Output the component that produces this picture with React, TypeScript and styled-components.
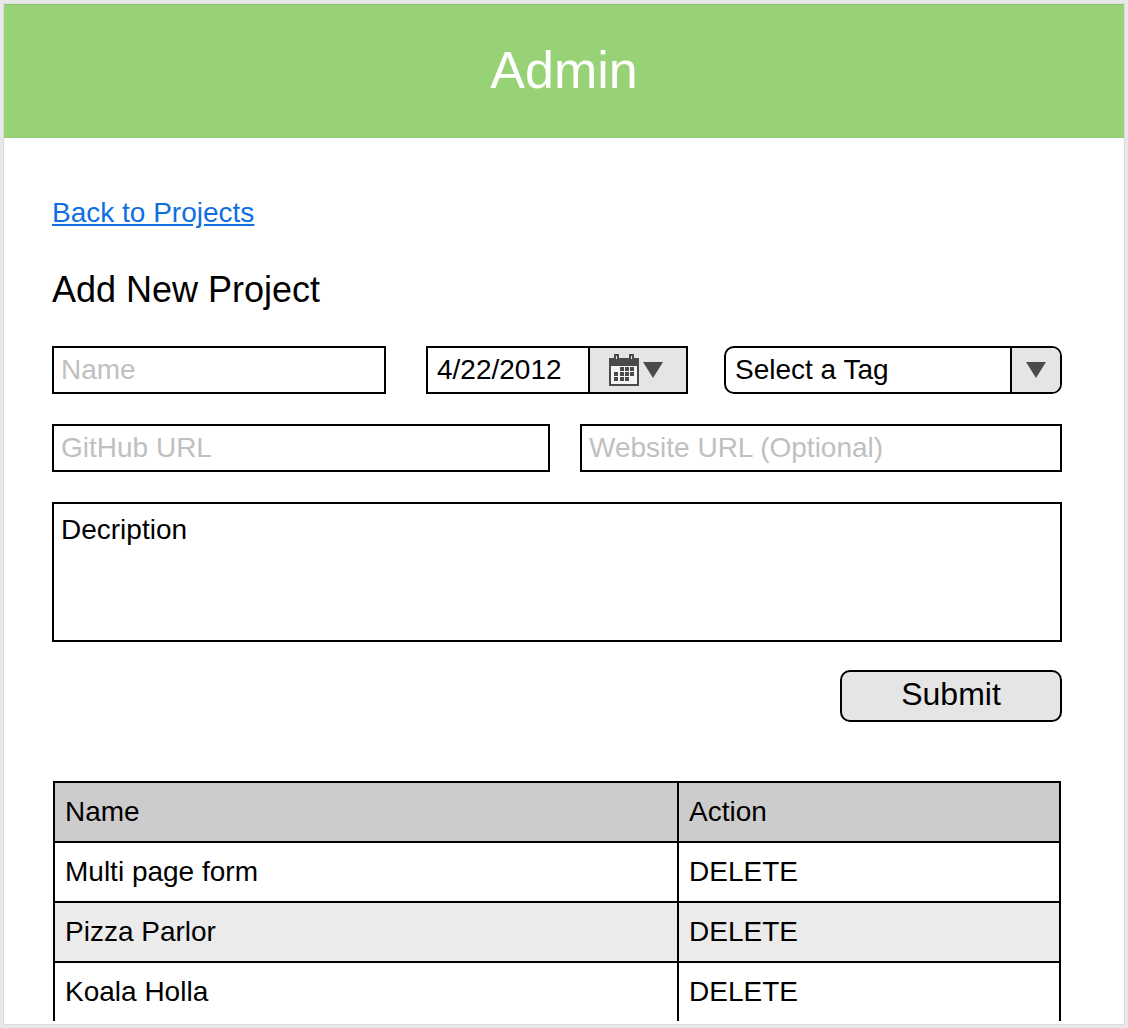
import styled, { createGlobalStyle } from "styled-components";

const GlobalStyle = createGlobalStyle`
  html, body {
    margin: 0;
    height: 100%;
    background: #e8e8e8;
    font-family: "Liberation Sans", Arial, sans-serif;
    overflow: hidden;
  }
`;

const Page = styled.div`
  box-sizing: border-box;
  width: 1128px;
  height: 1028px;
  padding: 4px;
`;

const Frame = styled.div`
  height: 1020px;
  background: #fff;
  overflow: hidden;
  box-shadow: 0 0 0 1px #dcdcdc;
`;

const Header = styled.header`
  height: 134px;
  display: flex;
  align-items: center;
  justify-content: center;
  padding-bottom: 3px;
  background: #98d276;
  border-top: 1px solid #8cc46e;
  box-sizing: border-box;
  color: #fff;
  font-size: 52px;
`;

const Content = styled.main`
  box-sizing: border-box;
  height: 883px;
  overflow: hidden;
  padding: 59px 62px 0 48px;
  display: flex;
  flex-direction: column;
`;

const BackLink = styled.a`
  color: #0f6fe0;
  font-size: 28px;
  line-height: 32px;
  text-decoration: underline;
  align-self: flex-start;
`;

const Title = styled.h2`
  margin: 41px 0 6px;
  font-weight: 400;
  font-size: 36px;
  line-height: 40px;
  color: #000;
`;

const Row = styled.div<{ $gap: number }>`
  display: flex;
  flex-shrink: 0;
  gap: ${(p) => p.$gap}px;
  margin-top: 30px;
`;

const Input = styled.div<{ $width: number }>`
  box-sizing: border-box;
  width: ${(p) => p.$width}px;
  height: 48px;
  padding: 0 7px;
  border: 2px solid #000;
  background: #fff;
  display: flex;
  align-items: center;
  font-size: 28px;
  color: #c0c0c0;
  white-space: nowrap;
`;

const DateField = styled.div`
  box-sizing: border-box;
  width: 262px;
  height: 48px;
  margin-left: 40px;
  border: 2px solid #000;
  display: flex;
  font-size: 28px;
`;

const DateValue = styled.div`
  width: 160px;
  padding-left: 9px;
  box-sizing: border-box;
  display: flex;
  align-items: center;
`;

const DateButton = styled.div`
  flex: 1;
  background: #e5e5e5;
  border-left: 2px solid #000;
  display: flex;
  align-items: center;
  padding-left: 19px;
  gap: 4px;
`;

const TagSelect = styled.div`
  box-sizing: border-box;
  width: 338px;
  height: 48px;
  margin-left: 36px;
  border: 2px solid #000;
  border-radius: 10px;
  overflow: hidden;
  display: flex;
  font-size: 28px;
`;

const TagValue = styled.div`
  flex: 1;
  padding-left: 9px;
  display: flex;
  align-items: center;
`;

const TagButton = styled.div`
  width: 48px;
  background: #e5e5e5;
  border-left: 2px solid #000;
  display: flex;
  align-items: center;
  justify-content: center;
`;

const Description = styled.div`
  box-sizing: border-box;
  flex-shrink: 0;
  height: 140px;
  margin-top: 30px;
  padding: 10px 7px;
  border: 2px solid #000;
  font-size: 28px;
  line-height: 32px;
`;

const SubmitButton = styled.button`
  align-self: flex-end;
  flex-shrink: 0;
  box-sizing: border-box;
  width: 222px;
  height: 52px;
  margin-top: 28px;
  border: 2px solid #000;
  border-radius: 10px;
  background: #e5e5e5;
  color: #000;
  font-family: inherit;
  font-size: 32px;
  padding: 0 0 3px;
`;

const Table = styled.div`
  flex-shrink: 0;
  margin: 59px 1px 0;
  border: solid #000;
  border-width: 2px 2px 0;
`;

const TableRow = styled.div<{ $bg: string }>`
  display: grid;
  grid-template-columns: 622px 1fr;
  height: 60px;
  box-sizing: border-box;
  background: ${(p) => p.$bg};
  border-bottom: 2px solid #000;
  font-size: 28px;
`;

const Cell = styled.div`
  display: flex;
  align-items: center;
  padding-left: 10px;

  & + & {
    border-left: 2px solid #000;
  }
`;

const Triangle = () => (
  <svg width="20" height="16" viewBox="0 0 20 16">
    <path d="M0 0H20L10 16Z" fill="#4a4a4a" />
  </svg>
);

const calendarCells = [
  [11, 13],
  [16, 13],
  [21, 13],
  [5, 18],
  [11, 18],
  [16, 18],
  [21, 18],
  [5, 23],
  [11, 23],
  [16, 23],
];

const CalendarIcon = () => (
  <svg width="30" height="32" viewBox="0 0 30 32">
    <path d="M0 4h5V0h5v4h10V0h5v4h5v8H0z" fill="#4a4a4a" />
    <path d="M7 2h1v3H7zM22 2h1v3h-1z" fill="#e5e5e5" />
    <path d="M1 11h28v20H1z" fill="#f4f4f4" stroke="#4a4a4a" strokeWidth="2" />
    {calendarCells.map(([x, y]) => (
      <rect key={`${x}-${y}`} x={x} y={y} width="4" height="4" fill="#4a4a4a" />
    ))}
  </svg>
);

const projects = ["Multi page form", "Pizza Parlor", "Koala Holla"];

export default function App() {
  return (
    <Page>
      <GlobalStyle />
      <Frame>
        <Header>Admin</Header>
        <Content>
          <BackLink href="#">Back to Projects</BackLink>
          <Title>Add New Project</Title>
          <Row $gap={0}>
            <Input $width={334}>Name</Input>
            <DateField>
              <DateValue>4/22/2012</DateValue>
              <DateButton>
                <CalendarIcon />
                <Triangle />
              </DateButton>
            </DateField>
            <TagSelect>
              <TagValue>Select a Tag</TagValue>
              <TagButton>
                <Triangle />
              </TagButton>
            </TagSelect>
          </Row>
          <Row $gap={30}>
            <Input $width={498}>GitHub URL</Input>
            <Input $width={482}>Website URL (Optional)</Input>
          </Row>
          <Description>Decription</Description>
          <SubmitButton>Submit</SubmitButton>
          <Table>
            <TableRow $bg="#cccccc">
              <Cell>Name</Cell>
              <Cell>Action</Cell>
            </TableRow>
            {projects.map((name, i) => (
              <TableRow key={name} $bg={i % 2 ? "#ebebeb" : "#fff"}>
                <Cell>{name}</Cell>
                <Cell>DELETE</Cell>
              </TableRow>
            ))}
          </Table>
        </Content>
      </Frame>
    </Page>
  );
}
